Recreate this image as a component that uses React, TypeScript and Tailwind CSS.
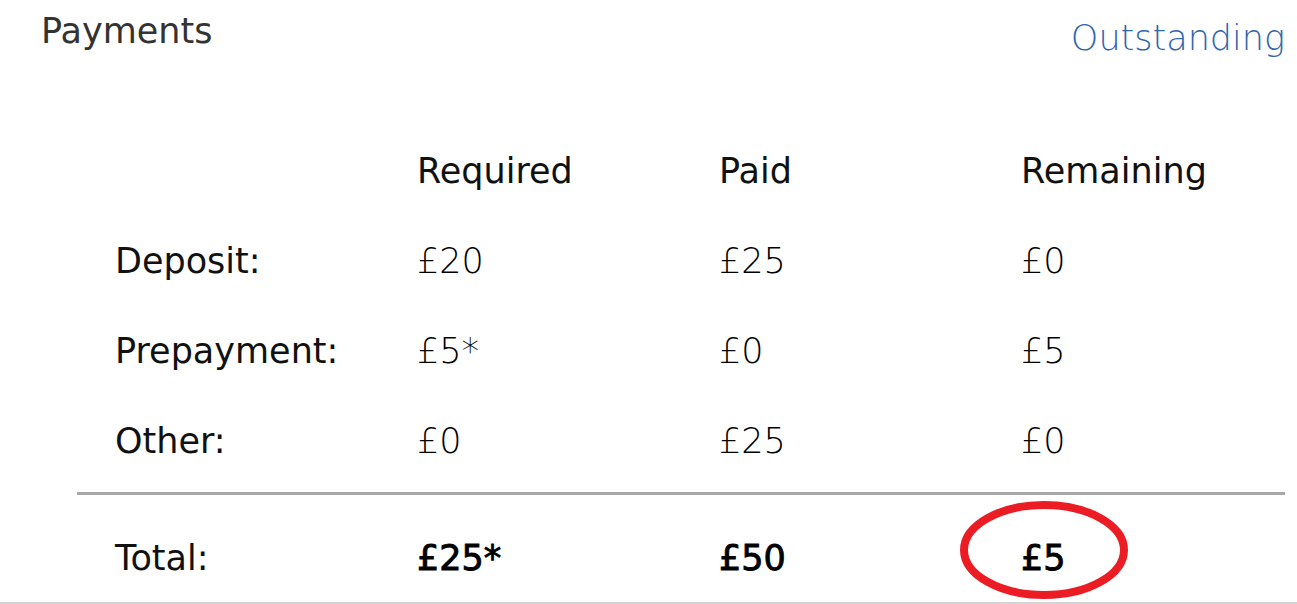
const rows = [
  { label: 'Deposit:', required: '£20', paid: '£25', remaining: '£0' },
  { label: 'Prepayment:', required: '£5*', paid: '£0', remaining: '£5' },
  { label: 'Other:', required: '£0', paid: '£25', remaining: '£0' },
];

const font = { fontFamily: '"DejaVu Sans", "Liberation Sans", sans-serif' };

export default function App() {
  return (
    <div className="h-[604px] w-[1297px] bg-white border-b-2 border-[#d4d4d4] text-[35px] leading-[42px] text-[#111]" style={font}>
      <div className="flex justify-between">
        <div className="pl-[41px] pt-[10px] text-[#333]">Payments</div>
        <div className="pr-[12px] pt-[17px] font-light text-[#2f66ad]">Outstanding</div>
      </div>

      <div className="ml-[77px] mt-[67px] w-[1208px]">
        <div className="grid h-[90px] grid-cols-4 items-center">
          <div />
          <div className="pl-[38px]">Required</div>
          <div className="pl-[38px]">Paid</div>
          <div className="pl-[38px]">Remaining</div>
        </div>

        {rows.map((row) => (
          <div key={row.label} className="grid h-[90px] grid-cols-4 items-center">
            <div className="pl-[38px]">{row.label}</div>
            <div className="pl-[38px] font-light text-black">{row.required}</div>
            <div className="pl-[38px] font-light text-black">{row.paid}</div>
            <div className="pl-[38px] font-light text-black">{row.remaining}</div>
          </div>
        ))}

        <div className="mt-[6px] border-t-[3px] border-[#a8a8a8]" />

        <div className="grid grid-cols-4 pt-[42px]">
          <div className="pl-[38px]">Total:</div>
          <div className="pl-[38px] text-black [-webkit-text-stroke:0.9px_black]">£25*</div>
          <div className="pl-[38px] text-black [-webkit-text-stroke:0.9px_black]">£50</div>
          <div className="relative pl-[38px] text-black [-webkit-text-stroke:0.9px_black]">
            £5
            <svg className="absolute left-[-24px] top-[-37px]" width="170" height="100" viewBox="0 0 170 100">
              <ellipse cx="85" cy="50" rx="80" ry="45" fill="none" stroke="#ec1c24" strokeWidth="8" />
            </svg>
          </div>
        </div>
      </div>
    </div>
  );
}
